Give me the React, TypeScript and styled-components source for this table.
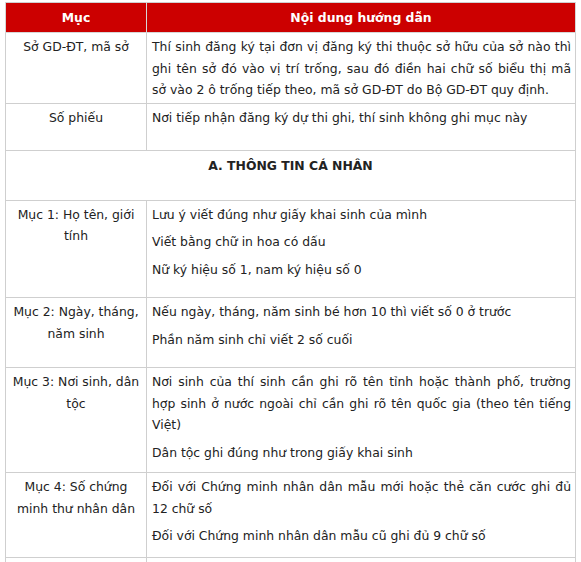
import React from 'react'
import styled, { createGlobalStyle } from 'styled-components'

type Row = {
  label: string
  lines: string[]
  tail: number
}

const introText =
  'Thí sinh đăng ký tại đơn vị đăng ký thi thuộc sở hữu của sở nào thì ghi tên sở đó vào vị trí trống, sau đó điền hai chữ số biểu thị mã sở\u00a0vào 2 ô trống tiếp theo, mã sở GD-ĐT do Bộ GD-ĐT quy định.'

const rows: Row[] = [
  {
    label: 'Mục 1: Họ tên, giới tính',
    lines: [
      'Lưu ý viết đúng như giấy khai sinh của mình',
      'Viết bằng chữ in hoa có dấu',
      'Nữ ký hiệu số 1, nam ký hiệu số 0',
    ],
    tail: 17,
  },
  {
    label: 'Mục 2: Ngày, tháng, năm sinh',
    lines: [
      'Nếu ngày, tháng, năm sinh bé hơn 10 thì viết số 0 ở trước',
      'Phần năm sinh chỉ viết 2 số cuối',
    ],
    tail: 17,
  },
  {
    label: 'Mục 3: Nơi sinh, dân tộc',
    lines: [
      'Nơi sinh của thí sinh cần ghi rõ tên tỉnh hoặc thành phố, trường hợp sinh ở nước ngoài chỉ cần ghi rõ tên quốc gia (theo tên tiếng Việt)',
      'Dân tộc ghi đúng như trong giấy khai sinh',
    ],
    tail: 9,
  },
  {
    label: 'Mục 4: Số chứng minh thư nhân dân',
    lines: [
      'Đối với Chứng minh nhân dân mẫu mới hoặc thẻ căn cước ghi đủ 12 chữ số',
      'Đối với Chứng minh nhân dân mẫu cũ ghi đủ 9 chữ số',
    ],
    tail: 10,
  },
]

export default function App() {
  return (
    <>
      <GlobalStyle />
      <Page>
        <Table>
          <colgroup>
            <col style={{ width: 141 }} />
            <col />
          </colgroup>
          <thead>
            <tr>
              <HeadCell>Mục</HeadCell>
              <HeadCell>Nội dung hướng dẫn</HeadCell>
            </tr>
          </thead>
          <tbody>
            <tr>
              <LabelCell tail={2}>Sở GD-ĐT, mã sở</LabelCell>
              <TextCell tail={2}>
                <Para>{introText}</Para>
              </TextCell>
            </tr>
            <tr>
              <LabelCell tail={22}>Số phiếu</LabelCell>
              <TextCell tail={22}>
                <Para>Nơi tiếp nhận đăng ký dự thi ghi, thí sinh không ghi mục này</Para>
              </TextCell>
            </tr>
            <tr>
              <SectionCell colSpan={2}>A. THÔNG TIN CÁ NHÂN</SectionCell>
            </tr>
            {rows.map((row) => (
              <tr key={row.label}>
                <LabelCell tail={row.tail}>{row.label}</LabelCell>
                <TextCell tail={row.tail}>
                  {row.lines.map((line) => (
                    <Para key={line}>{line}</Para>
                  ))}
                </TextCell>
              </tr>
            ))}
            <tr>
              <LabelCell tail={20} />
              <TextCell tail={20} />
            </tr>
          </tbody>
        </Table>
      </Page>
    </>
  )
}

const GlobalStyle = createGlobalStyle`
  html, body {
    margin: 0;
    padding: 0;
    background: #ffffff;
    overflow: hidden;
  }
  body {
    font-family: "DejaVu Sans", Verdana, sans-serif;
    font-size: 12.4px;
    color: #222222;
  }
`

const Page = styled.div`
  padding: 2px 5px 0 5px;
  width: 571px;
  height: 560px;
  overflow: hidden;
`

const Table = styled.table`
  width: 571px;
  border-collapse: collapse;
  table-layout: fixed;
  border: 1px solid #cfcfcf;
`

const HeadCell = styled.th`
  background: #cc0000;
  color: #ffffff;
  font-weight: bold;
  text-align: center;
  height: 28px;
  padding: 0 4px 1px;
  border: 1px solid #d6d6d6;
  border-top: none;
  line-height: 21px;
`

const LabelCell = styled.td<{ tail: number }>`
  vertical-align: top;
  text-align: center;
  padding: 3px 5px ${({ tail }) => tail}px;
  border: 1px solid #cfcfcf;
  line-height: 21.5px;
`

const TextCell = styled.td<{ tail: number }>`
  vertical-align: top;
  text-align: justify;
  padding: 3px 4px ${({ tail }) => tail}px 5px;
  border: 1px solid #cfcfcf;
  line-height: 21.5px;
`

const Para = styled.p`
  margin: 0 0 6px;

  &:last-child {
    margin-bottom: 0;
  }
`

const SectionCell = styled.td`
  text-align: center;
  font-weight: bold;
  vertical-align: top;
  padding: 4px 5px 23px;
  border: 1px solid #cfcfcf;
  line-height: 21.5px;
`
